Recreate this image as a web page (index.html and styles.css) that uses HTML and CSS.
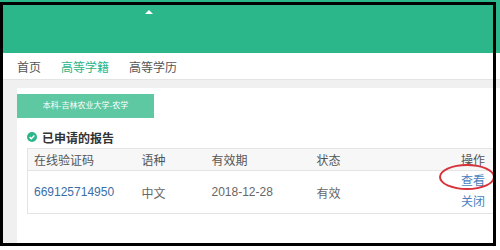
FILE: index.html
```html
<!DOCTYPE html>
<html lang="zh-CN">
<head>
  <meta charset="UTF-8">
  <title>学信档案</title>
  <link rel="stylesheet" href="styles.css">
</head>
<body>

<div class="page">
  <header class="top">
    <span class="caret"></span>
  </header>

  <nav class="tabs">
    <a href="#">首页</a>
    <a href="#" class="on">高等学籍</a>
    <a href="#">高等学历</a>
  </nav>

  <main class="main">
    <div class="card">
      <div class="school">本科-吉林农业大学-农学</div>

      <section class="reports">
        <h3 class="title">
          <svg class="ok" width="10" height="10" viewBox="0 0 10 10">
            <circle cx="5" cy="5" r="5" fill="#2bb58a"/>
            <path d="M2.6 5.1 L4.3 6.7 L7.4 3.5" fill="none" stroke="#fff" stroke-width="1.5"/>
          </svg>
          已申请的报告
        </h3>
        <table>
          <colgroup>
            <col style="width:108px">
            <col style="width:70px">
            <col style="width:105px">
            <col>
            <col style="width:80px">
          </colgroup>
          <thead>
            <tr>
              <th>在线验证码</th>
              <th>语种</th>
              <th>有效期</th>
              <th>状态</th>
              <th class="act">操作</th>
            </tr>
          </thead>
          <tbody>
            <tr>
              <td><a href="#" class="code">669125714950</a></td>
              <td>中文</td>
              <td>2018-12-28</td>
              <td>有效</td>
              <td class="act">
                <a href="#">查看</a>
                <a href="#">关闭</a>
              </td>
            </tr>
          </tbody>
        </table>
      </section>
    </div>
  </main>

  <!-- annotation marks from the screenshot -->
  <div class="mark"></div>
  <div class="frame"></div>
</div>

</body>
</html>
```

FILE: styles.css
```css
body {
  margin: 0;
  background: #fff;
  font-family: "Liberation Sans", "Noto Sans CJK SC", sans-serif;
  color: #555;
}

a {
  text-decoration: none;
}

.page {
  position: relative;
  width: 500px;
  height: 250px;
  overflow: hidden;
}

.top {
  height: 53px;
  background: #2bb78a;
  padding: 10px 0 0 145px;
  box-sizing: border-box;
}

.caret {
  display: block;
  width: 0;
  height: 0;
  border-left: 4px solid transparent;
  border-right: 4px solid transparent;
  border-bottom: 4px solid #fff;
}

.tabs {
  display: flex;
  align-items: center;
  gap: 20px;
  height: 26px;
  padding-left: 17px;
  background: #fff;
  border-bottom: 1px solid #e4e4e4;
  font-size: 12px;
}

.tabs a {
  color: #555;
}

.tabs a.on {
  color: #2bb58a;
}

.main {
  height: 166px;
  box-sizing: border-box;
  padding: 8px 0 0 17px;
  background: #f0f0f0;
}

.card {
  height: 100%;
  background: #fff;
  padding-top: 6px;
  box-sizing: border-box;
}

.school {
  width: 137px;
  height: 24px;
  line-height: 24px;
  background: #5ec8a2;
  color: #fff;
  font-size: 8px;
  text-align: center;
}

.reports {
  padding: 11px 6px 0 10px;
}

.title {
  display: flex;
  align-items: center;
  gap: 5px;
  margin: 0 0 3px;
  height: 16px;
  font-size: 12px;
  font-weight: bold;
  color: #333;
}

table {
  width: 100%;
  border-collapse: collapse;
  border: 1px solid #e4e4e4;
  font-size: 12px;
  table-layout: fixed;
}

th {
  height: 21px;
  padding: 0 6px;
  background: #f7f7f7;
  border-bottom: 1px solid #e4e4e4;
  font-weight: normal;
  text-align: left;
  color: #555;
}

td {
  height: 42px;
  padding: 0 6px;
  color: #666;
}

.code {
  color: #3a6ea8;
}

.act {
  text-align: right;
  padding-right: 8px;
}

td.act a {
  display: block;
  line-height: 21px;
  color: #4a7fc0;
}

.mark {
  position: absolute;
  left: 439px;
  top: 164px;
  width: 56px;
  height: 26px;
  box-sizing: border-box;
  border: 2.5px solid #d8323a;
  border-radius: 50%;
}

.frame {
  position: absolute;
  left: 0;
  top: 2px;
  width: 496px;
  height: 244px;
  box-sizing: border-box;
  border: 3px solid #000;
}
```
